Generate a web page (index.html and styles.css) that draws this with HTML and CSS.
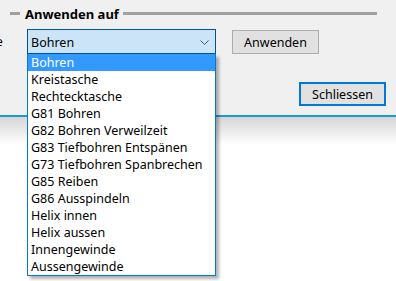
FILE: index.html
```html
<!DOCTYPE html>
<html lang="de">
<head>
    <meta charset="UTF-8">
    <meta name="viewport" content="width=device-width, initial-scale=1.0">
    <title>Anwenden auf</title>
    <link rel="stylesheet" href="styles.css">
</head>
<body>
    <div class="dialog">
        <div class="group-title">
            <span class="line short"></span>
            <span class="title">Anwenden auf</span>
            <span class="line long"></span>
        </div>
        <div class="apply-row">
            <span class="cut-label">e</span>
            <div class="combo">
                <div class="combo-box">
                    <span>Bohren</span>
                    <svg class="chevron" width="9" height="5" viewBox="0 0 9 5">
                        <path d="M0.5 0.5 L4.5 4.5 L8.5 0.5" fill="none" stroke="#555" stroke-width="1"/>
                    </svg>
                </div>
                <ul class="dropdown">
                    <li class="selected">Bohren</li>
                    <li>Kreistasche</li>
                    <li>Rechtecktasche</li>
                    <li>G81 Bohren</li>
                    <li>G82 Bohren Verweilzeit</li>
                    <li>G83 Tiefbohren Entspänen</li>
                    <li>G73 Tiefbohren Spanbrechen</li>
                    <li>G85 Reiben</li>
                    <li>G86 Ausspindeln</li>
                    <li>Helix innen</li>
                    <li>Helix aussen</li>
                    <li>Innengewinde</li>
                    <li>Aussengewinde</li>
                </ul>
            </div>
            <button class="btn">Anwenden</button>
        </div>
        <div class="footer">
            <button class="btn default">Schliessen</button>
        </div>
    </div>
    <div class="shade"></div>
</body>
</html>
```

FILE: styles.css
```css
body {
    margin: 0;
    background: #ffffff;
    font-family: "Noto Sans", "Open Sans", sans-serif;
    font-size: 12px;
    color: #000;
}
.dialog {
    background: #f0f0f0;
    border-bottom: 2px solid #1b9ad2;
    box-sizing: border-box;
    padding-top: 5px;
    height: 117px;
}
.group-title {
    display: flex;
    align-items: center;
    height: 17px;
    padding-left: 10px;
}
.line {
    height: 3px;
    background: #a0a0a0;
}
.line.short {
    width: 10px;
}
.line.long {
    width: 254px;
}
.title {
    font-weight: bold;
    font-size: 13px;
    padding: 0 4px 0 5px;
}
.apply-row {
    display: flex;
    align-items: flex-start;
    margin-top: 7px;
}
.cut-label {
    margin-left: -4px;
    width: 31px;
    line-height: 25px;
}
.combo {
    position: relative;
    width: 189px;
}
.combo-box {
    height: 25px;
    box-sizing: border-box;
    border: 1px solid #005499;
    background: #cce4f7;
    display: flex;
    align-items: center;
    justify-content: space-between;
    padding: 1px 6px 0 3px;
    font-size: 12.5px;
}
.dropdown {
    position: absolute;
    top: 25px;
    left: 0;
    width: 189px;
    margin: 0;
    padding: 0;
    list-style: none;
    background: #fff;
    border: 1px solid #0078d7;
    border-top: none;
    box-sizing: border-box;
    box-shadow: 3px 3px 3px rgba(0, 0, 0, 0.3);
}
.dropdown li {
    height: 17px;
    line-height: 17px;
    padding-left: 3px;
    font-size: 12.5px;
    white-space: nowrap;
}
.dropdown li.selected {
    background: #3399ff;
    color: #fff;
}
.btn {
    font-family: inherit;
    font-size: 12.5px;
    background: #e1e1e1;
    border: 1px solid #adadad;
    color: #000;
    width: 87px;
    height: 24px;
    padding: 0;
    margin-left: 16px;
    margin-top: 1px;
}
.btn.default {
    border: 2px solid #0078d7;
    margin: 0;
}
.footer {
    display: flex;
    justify-content: flex-end;
    padding: 28px 10px 0 0;
}
.shade {
    height: 164px;
    background: linear-gradient(#d6d6d6, #ffffff 28px);
}
```
